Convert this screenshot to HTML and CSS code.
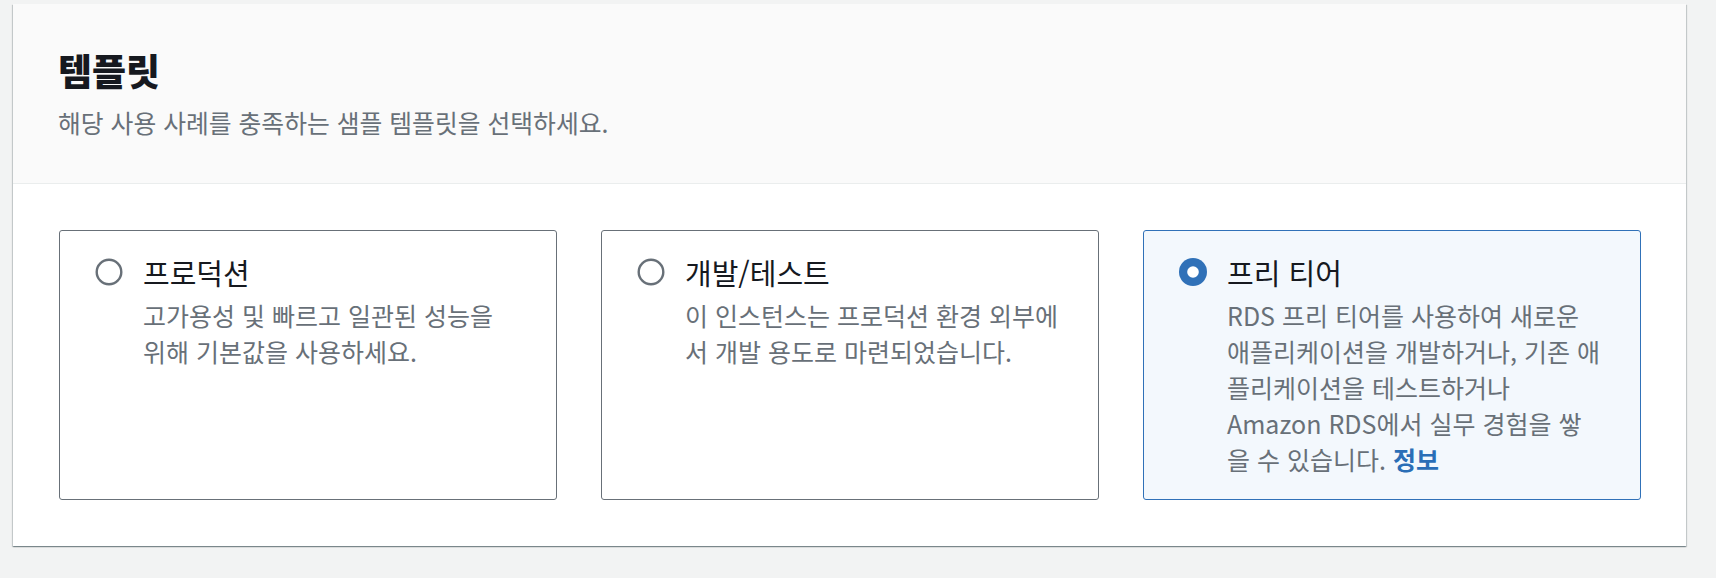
FILE: index.html
```html
<!DOCTYPE html>
<html lang="ko">
<head>
<meta charset="utf-8">
<title>템플릿</title>
<link rel="stylesheet" href="styles.css">
</head>
<body>
<div class="page">
  <section class="container">
    <header class="header">
      <h2 class="title">템플릿</h2>
      <p class="desc">해당 사용 사례를 충족하는 샘플 템플릿을 선택하세요.</p>
    </header>
    <div class="body">
      <div class="tiles">
        <div class="tile">
          <span class="radio">
            <svg viewBox="0 0 28 28" width="28" height="28"><circle cx="14" cy="14" r="12.3" fill="#fff" stroke="#687078" stroke-width="2.4"/></svg>
          </span>
          <div class="tile-text">
            <div class="tile-title">프로덕션</div>
            <div class="tile-desc">고가용성 및 빠르고 일관된 성능을<br>위해 기본값을 사용하세요.</div>
          </div>
        </div>
        <div class="tile">
          <span class="radio">
            <svg viewBox="0 0 28 28" width="28" height="28"><circle cx="14" cy="14" r="12.3" fill="#fff" stroke="#687078" stroke-width="2.4"/></svg>
          </span>
          <div class="tile-text">
            <div class="tile-title">개발/테스트</div>
            <div class="tile-desc">이 인스턴스는 프로덕션 환경 외부에<br>서 개발 용도로 마련되었습니다.</div>
          </div>
        </div>
        <div class="tile tile-selected">
          <span class="radio">
            <svg viewBox="0 0 28 28" width="28" height="28"><circle cx="14" cy="14" r="14" fill="#3071b8"/><circle cx="14" cy="14" r="5.8" fill="#fff"/></svg>
          </span>
          <div class="tile-text">
            <div class="tile-title">프리 티어</div>
            <div class="tile-desc">RDS 프리 티어를 사용하여 새로운<br>애플리케이션을 개발하거나, 기존 애<br>플리케이션을 테스트하거나<br>Amazon RDS에서 실무 경험을 쌓<br>을 수 있습니다. <a class="info" href="#">정보</a></div>
          </div>
        </div>
      </div>
    </div>
  </section>
</div>
</body>
</html>
```
FILE: styles.css
```css
html, body {
  margin: 0;
}
body {
  background: #f2f3f3;
  font-family: "Noto Sans CJK KR", "Noto Sans", sans-serif;
  color: #16191f;
}
.page {
  padding: 4px 30px 32px 13px;
}
.container {
  background: #fff;
  box-shadow: 0 1px 1px 0 rgba(0, 28, 36, 0.3), 1px 1px 1px 0 rgba(0, 28, 36, 0.15), -1px 1px 1px 0 rgba(0, 28, 36, 0.15);
}
.header {
  background: #fafafa;
  border-bottom: 1px solid #eaeded;
  padding: 44px 45px 43px 45px;
}
.title {
  margin: 0;
  font-size: 37px;
  line-height: 44px;
  font-weight: 900;
  color: #16191f;
}
.desc {
  margin: 12px 0 0;
  font-size: 24.8px;
  line-height: 36px;
  color: #687078;
}
.body {
  padding: 46px 45px 46px 46px;
}
.tiles {
  display: grid;
  grid-template-columns: repeat(3, 1fr);
  gap: 44px;
}
.tile {
  box-sizing: border-box;
  height: 270px;
  display: flex;
  align-items: flex-start;
  gap: 20px;
  padding: 23px 16px 20px 35px;
  border: 1px solid #687078;
  border-radius: 3px;
  background: #fff;
}
.tile-selected {
  border-color: #3071b8;
  background: #f3f8fd;
}
.radio {
  flex: none;
  width: 28px;
  height: 28px;
  margin-top: 4px;
}
.radio svg {
  display: block;
}
.tile-title {
  font-size: 29px;
  line-height: 36px;
  color: #16191f;
}
.tile-desc {
  margin-top: 7px;
  font-size: 25px;
  line-height: 36px;
  color: #687078;
  white-space: nowrap;
}
.info {
  color: #2a6eb6;
  font-weight: 700;
  text-decoration: none;
}
```
